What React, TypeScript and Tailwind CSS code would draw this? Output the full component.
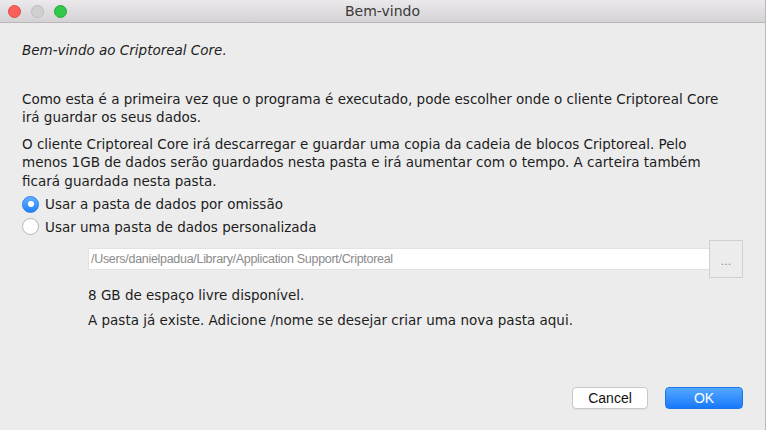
import { useState } from "react";

const App = () => {
  const [custom, setCustom] = useState(false);

  return (
    <div className="w-[768px] h-[430px] bg-white overflow-hidden">
      <div className="w-[766px] h-[430px] bg-[#ececec] border-r border-[#b9b9b9] flex flex-col font-['DejaVu_Sans',sans-serif] text-[13.5px] text-[#1d1d1d]">
        {/* Title bar */}
        <div className="relative h-[23px] shrink-0 bg-gradient-to-b from-[#ebe9eb] to-[#d4d2d4] border-b border-[#b8b6b8] flex items-center justify-center">
          <div className="absolute left-[8px] top-[5px] flex gap-[10px]">
            <span className="w-[13px] h-[13px] rounded-full bg-[#fc605b] border border-[#de4a45]" />
            <span className="w-[13px] h-[13px] rounded-full bg-[#d0d0d0] border border-[#bdbdbd]" />
            <span className="w-[13px] h-[13px] rounded-full bg-[#34c84a] border border-[#23a83a]" />
          </div>
          <span className="text-[14px] text-[#3a3a3a]">Bem-vindo</span>
        </div>

        {/* Content */}
        <div className="flex-1 flex flex-col pl-[22px] pr-[12px] pt-[18px] leading-[18.5px] whitespace-nowrap">
          <p className="italic">Bem-vindo ao Criptoreal Core.</p>

          <p className="mt-[30px]">
            Como esta é a primeira vez que o programa é executado, pode escolher onde o cliente Criptoreal Core
            <br />
            irá guardar os seus dados.
          </p>
          <p className="mt-[8px]">
            O cliente Criptoreal Core irá descarregar e guardar uma copia da cadeia de blocos Criptoreal. Pelo
            <br />
            menos 1GB de dados serão guardados nesta pasta e irá aumentar com o tempo. A carteira também
            <br />
            ficará guardada nesta pasta.
          </p>

          <div className="mt-[5px] flex flex-col gap-[4px]">
            <label className="flex items-center gap-[6px] cursor-default" onClick={() => setCustom(false)}>
              {!custom ? (
                <span className="w-[17px] h-[17px] rounded-full bg-gradient-to-b from-[#64b0fd] to-[#1f82fb] border border-[#2a7ff0] flex items-center justify-center">
                  <span className="w-[6px] h-[6px] rounded-full bg-white" />
                </span>
              ) : (
                <span className="w-[17px] h-[17px] rounded-full bg-white border border-[#b5b5b5]" />
              )}
              <span>Usar a pasta de dados por omissão</span>
            </label>
            <label className="flex items-center gap-[6px] cursor-default" onClick={() => setCustom(true)}>
              {custom ? (
                <span className="w-[17px] h-[17px] rounded-full bg-gradient-to-b from-[#64b0fd] to-[#1f82fb] border border-[#2a7ff0] flex items-center justify-center">
                  <span className="w-[6px] h-[6px] rounded-full bg-white" />
                </span>
              ) : (
                <span className="w-[17px] h-[17px] rounded-full bg-white border border-[#b5b5b5]" />
              )}
              <span>Usar uma pasta de dados personalizada</span>
            </label>
          </div>

          {/* Path chooser */}
          <div className="ml-[66px] mt-[4px] flex items-center">
            <input
              type="text"
              readOnly
              value="/Users/danielpadua/Library/Application Support/Criptoreal"
              className="w-[623px] h-[22px] bg-white border border-[#e2e2e2] px-[2px] text-[12.5px] tracking-[-0.3px] text-[#8a8a8a] font-['Liberation_Sans',sans-serif] outline-none"
            />
            <button className="-ml-[2px] w-[34px] h-[38px] border border-[#d0d0d0] bg-[#ececec] text-[#8a8a8a] text-[11px] leading-none flex items-end justify-center pb-[10px]">
              ...
            </button>
          </div>

          <div className="ml-[66px] mt-[8px] flex flex-col gap-[6px]">
            <p>8 GB de espaço livre disponível.</p>
            <p>A pasta já existe. Adicione /nome se desejar criar uma nova pasta aqui.</p>
          </div>

          {/* Buttons */}
          <div className="mt-auto mb-[21px] pr-[10px] flex justify-end gap-[17px] font-['Liberation_Sans',sans-serif] text-[14px]">
            <button className="w-[76px] h-[22px] rounded-[4px] bg-white border border-[#c8c8c8] shadow-[0_1px_0_rgba(0,0,0,0.05)] text-[#111]">
              Cancel
            </button>
            <button className="w-[78px] h-[22px] rounded-[4px] bg-gradient-to-b from-[#52a7fd] to-[#1679fb] border border-[#1f77ea] text-white">
              OK
            </button>
          </div>
        </div>
      </div>
    </div>
  );
};

export default App;
